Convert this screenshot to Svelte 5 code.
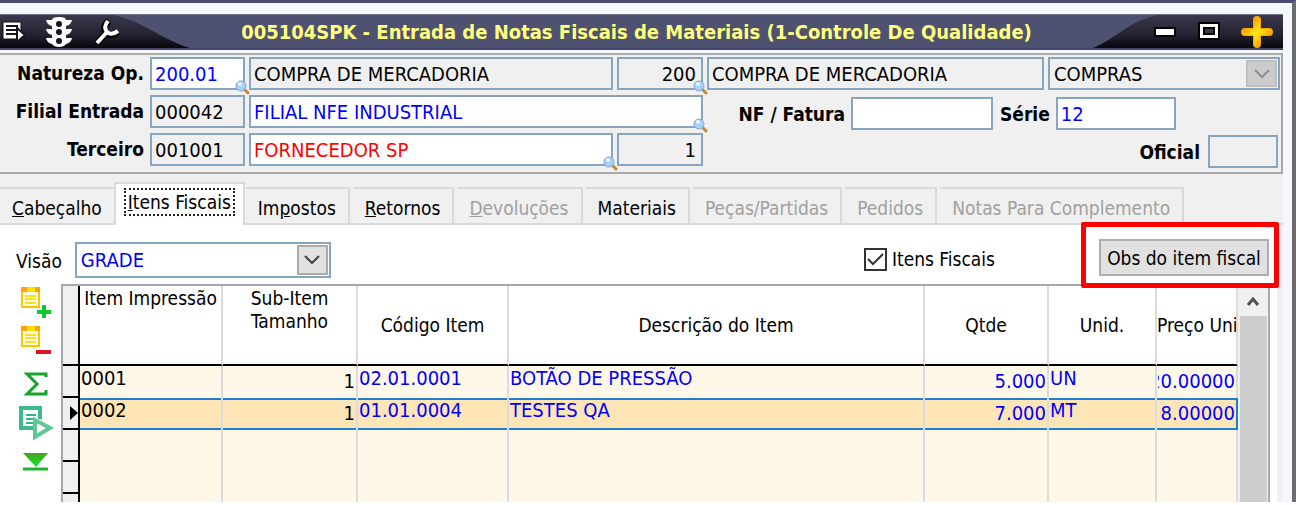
<script>
  let tabs = [
    { id: 'cabecalho', pre: '', key: 'C', post: 'abeçalho' },
    { id: 'itens', pre: '', key: 'I', post: 'tens Fiscais' },
    { id: 'impostos', pre: 'Im', key: 'p', post: 'ostos' },
    { id: 'retornos', pre: '', key: 'R', post: 'etornos' },
    { id: 'devolucoes', pre: '', key: 'D', post: 'evoluções', disabled: true },
    { id: 'materiais', pre: 'Materiais', key: '', post: '' },
    { id: 'pecas', pre: 'Peças/Partidas', key: '', post: '', disabled: true },
    { id: 'pedidos', pre: 'Pedidos', key: '', post: '', disabled: true },
    { id: 'notas', pre: 'Notas Para Complemento', key: '', post: '', disabled: true }
  ];

  let rows = [
    { item: '0001', sub: '1', codigo: '02.01.0001', descricao: 'BOTÃO DE PRESSÃO', qtde: '5.000', unid: 'UN', preco: '20.00000' },
    { item: '0002', sub: '1', codigo: '01.01.0004', descricao: 'TESTES QA', qtde: '7.000', unid: 'MT', preco: '8.00000' }
  ];

  let emptyRows = [1, 2, 3];
  let activeTab = 'itens';
  let selected = 1;
  let itensFiscais = true;
</script>

{#snippet lens()}
  <svg class="lens" viewBox="0 0 15 15" aria-hidden="true">
    <path d="M9 9l4 4" stroke="#c08a3e" stroke-width="3" stroke-linecap="round" />
    <circle cx="6" cy="6" r="5" fill="#a9d0fa" stroke="#7fa6d8" />
    <circle cx="5" cy="4" r="2" fill="#e9f5ff" />
  </svg>
{/snippet}

{#snippet note()}
  <rect x="3" y="3" width="17" height="18" fill="#fffbe0" stroke="#fdc400" stroke-width="2" />
  <path d="M2 1h19v5H2z" fill="#ffa010" />
  <path d="M8 1h8v5H8z" fill="#ffe100" />
  <path d="M6 10h11M6 13h11M6 17h11" stroke="#ffdf20" stroke-width="2" />
{/snippet}

<div class="window">
  <header class="titlebar">
    <svg class="shade left" viewBox="0 0 190 36" preserveAspectRatio="none" aria-hidden="true">
      <defs>
        <linearGradient id="dark" x1="0" y1="0" x2="0" y2="1">
          <stop offset="0" stop-color="#3a384c" />
          <stop offset="0.6" stop-color="#242231" />
          <stop offset="1" stop-color="#07070c" />
        </linearGradient>
      </defs>
      <path d="M0 0H113C143 6 156 24 190 36H0z" fill="url(#dark)" />
    </svg>
    <svg class="shade right" viewBox="0 0 190 36" preserveAspectRatio="none" aria-hidden="true">
      <path d="M190 0H65C36 6 26 24 0 36H190z" fill="url(#dark)" />
    </svg>

    <div class="tools">
      <button aria-label="Menu">
        <svg width="24" height="24" viewBox="0 0 24 24">
          <path d="M2 2h18v17H2z" fill="#fff" stroke="#111" />
          <path d="M5 6h12M5 10h12M5 14h10" stroke="#16151f" stroke-width="2" />
          <path d="M16 8l8 7-8 7z" fill="#fff" stroke="#16151f" stroke-width="2" />
        </svg>
      </button>
      <button aria-label="Status">
        <svg width="28" height="32" viewBox="0 0 28 32">
          <path d="M7 4Q7 1 14 1t7 3h6q-1 5-6 6v3h6q-1 5-6 6v3h6q-1 5-6 6-2 3-7 3t-7-3q-5-1-6-6h6v-3q-5-1-6-6h6v-3Q2 9 1 4z" fill="#fff" />
          <g fill="#16151f"><circle cx="14" cy="8" r="3" /><circle cx="14" cy="16" r="3" /><circle cx="14" cy="25" r="3" /></g>
        </svg>
      </button>
      <button aria-label="Ferramentas">
        <svg width="28" height="28" viewBox="0 0 28 28">
          <path d="M4 25L14 14" stroke="#000" stroke-width="7" />
          <path d="M16 3Q9 9 13 15Q18 19 25 14" fill="none" stroke="#000" stroke-width="7" />
          <path d="M4 25L14 14" stroke="#fff" stroke-width="4" />
          <path d="M15 3Q10 9 14 14Q18 18 25 13" fill="none" stroke="#fff" stroke-width="4" />
        </svg>
      </button>
    </div>
    <h1>005104SPK - Entrada de Notas Fiscais de Materiais (1-Controle De Qualidade)</h1>
    <div class="controls">
      <button aria-label="Minimizar">
        <svg width="24" height="32" viewBox="0 0 24 32"><path d="M2 12h20v8H2z" fill="#fff" stroke="#000" stroke-width="2" /></svg>
      </button>
      <button aria-label="Maximizar">
        <svg width="24" height="32" viewBox="0 0 24 32">
          <path d="M2 7h20v16H2z" fill="#fff" stroke="#000" stroke-width="2" />
          <path d="M7 12h10v6H7z" fill="#3a384c" stroke="#000" stroke-width="2" />
        </svg>
      </button>
      <button aria-label="Fechar">
        <svg width="32" height="32" viewBox="0 0 32 32">
          <defs>
            <linearGradient id="gold" x1="0" y1="0" x2="1" y2="1">
              <stop offset="0.2" stop-color="#ff9c00" />
              <stop offset="0.5" stop-color="#ffe81a" />
              <stop offset="0.8" stop-color="#ffa200" />
            </linearGradient>
          </defs>
          <path d="M16 4v24M4 16h24" stroke="#ffa800" stroke-width="8" stroke-linecap="round" />
          <path d="M13 2h6v11h11v6H19v11h-6V19H2v-6h11z" fill="url(#gold)" />
        </svg>
      </button>
    </div>
  </header>

  <form class="fields">
    <label for="natureza">Natureza Op.</label>
    <div class="field"><input id="natureza" class="edit" value="200.01" />{@render lens()}</div>
    <input aria-label="Descrição da natureza" value="COMPRA DE MERCADORIA" readonly />
    <div class="field"><input aria-label="Código da operação" class="num" value="200" readonly />{@render lens()}</div>
    <input aria-label="Operação" value="COMPRA DE MERCADORIA" readonly />
    <div class="combo off">
      <select aria-label="Tipo" disabled><option>COMPRAS</option></select>
      <span class="drop"><svg width="18" height="12" viewBox="0 0 18 12"><path d="M2 2l7 7 7-7" /></svg></span>
    </div>

    <label for="filial">Filial Entrada</label>
    <input id="filial" value="000042" readonly />
    <div class="field wide"><input aria-label="Nome da filial" class="edit" value="FILIAL NFE INDUSTRIAL" />{@render lens()}</div>
    <div class="group">
      <label class="nf" for="nf">NF / Fatura</label>
      <input id="nf" class="edit" value="" />
      <label for="serie">Série</label>
      <input id="serie" class="edit serie" value="12" />
    </div>

    <label for="terceiro">Terceiro</label>
    <input id="terceiro" value="001001" readonly />
    <div class="field"><input aria-label="Nome do terceiro" class="edit alert" value="FORNECEDOR SP" />{@render lens()}</div>
    <input aria-label="Filial do terceiro" class="num" value="1" readonly />
    <div class="group end">
      <label for="oficial">Oficial</label>
      <input id="oficial" class="oficial" value="" readonly />
    </div>
  </form>

  <div class="tabs" role="tablist">
    {#each tabs as tab}
      <button
        role="tab"
        class:active={tab.id === activeTab}
        aria-selected={tab.id === activeTab}
        disabled={tab.disabled}
        on:click={() => (activeTab = tab.id)}
      ><span>{tab.pre}{#if tab.key}<u>{tab.key}</u>{/if}{tab.post}</span></button>
    {/each}
  </div>

  <main class="panel">
    <div class="bar">
      <label for="visao">Visão</label>
      <div class="combo view">
        <select id="visao"><option>GRADE</option></select>
        <span class="drop"><svg width="18" height="12" viewBox="0 0 18 12"><path d="M2 2l7 7 7-7" /></svg></span>
      </div>
      <label class="check"><input type="checkbox" bind:checked={itensFiscais} />Itens Fiscais</label>
      <div class="marked"><button>Obs do item fiscal</button></div>
    </div>

    <div class="work">
      <div class="side">
        <button aria-label="Incluir item">
          <svg width="32" height="34" viewBox="0 0 32 34">
            {@render note()}
            <path d="M25 19v13M18 26h14" stroke="#10c832" stroke-width="4" />
          </svg>
        </button>
        <button aria-label="Excluir item">
          <svg width="32" height="34" viewBox="0 0 32 34">
            {@render note()}
            <path d="M17 27h15" stroke="#dc1420" stroke-width="4" />
          </svg>
        </button>
        <div class="more">
          <button aria-label="Totalizar">
            <svg width="32" height="34" viewBox="0 0 32 34">
              <path d="M27 10V7H8l10 10L8 27h19v-4" fill="none" stroke="#16a52c" stroke-width="3" />
            </svg>
          </button>
          <button aria-label="Executar">
            <svg width="34" height="34" viewBox="0 0 34 34">
              <path d="M14 22H2V2h19v11" fill="none" stroke="#3fb98a" stroke-width="4" />
              <path d="M7 9h10M7 13h8M7 17h8" stroke="#2fb588" stroke-width="2" />
              <path d="M16 14v17l15-9z" fill="#fff" stroke="#62c596" stroke-width="4" />
            </svg>
          </button>
          <button aria-label="Último item">
            <svg width="32" height="34" viewBox="0 0 32 34">
              <defs>
                <linearGradient id="leaf" x1="0" y1="0" x2="0" y2="1">
                  <stop offset="0" stop-color="#4d9c20" />
                  <stop offset="1" stop-color="#0cf02c" />
                </linearGradient>
              </defs>
              <path d="M4 8h25L17 22z" fill="url(#leaf)" />
              <path d="M4 24h25" stroke="#22b428" stroke-width="3" />
            </svg>
          </button>
        </div>
      </div>

      <div class="grid">
        <table>
          <colgroup>
            <col class="c-mark" /><col class="c-item" /><col class="c-sub" /><col class="c-cod" />
            <col /><col class="c-qtde" /><col class="c-unid" /><col class="c-preco" />
          </colgroup>
          <thead>
            <tr>
              <th class="mark"></th>
              <th class="top">Item Impressão</th>
              <th class="top">Sub-Item<br />Tamanho</th>
              <th>Código Item</th>
              <th>Descrição do Item</th>
              <th>Qtde</th>
              <th>Unid.</th>
              <th>Preço Uni</th>
            </tr>
          </thead>
          <tbody>
            {#each rows as row, i}
              <tr class:selected={i === selected} on:click={() => (selected = i)}>
                <td class="mark">{#if i === selected}<i></i>{/if}</td>
                <td class="plain">{row.item}</td>
                <td class="plain num"><span>{row.sub}</span></td>
                <td>{row.codigo}</td>
                <td>{row.descricao}</td>
                <td class="num"><span>{row.qtde}</span></td>
                <td>{row.unid}</td>
                <td class="num"><span>{row.preco}</span></td>
              </tr>
            {/each}
            {#each emptyRows as n}
              <tr><td class="mark"></td><td></td><td></td><td></td><td></td><td></td><td></td><td></td></tr>
            {/each}
          </tbody>
        </table>
        <div class="scroll">
          <svg width="14" height="30" viewBox="0 0 14 30" aria-hidden="true"><path d="M2 19l5-6 5 6" fill="none" stroke="#505050" stroke-width="3" /></svg>
          <div class="thumb"></div>
        </div>
      </div>
    </div>
  </main>
</div>

<style>
  :global(body) { background: #fff; }

  .window {
    box-sizing: border-box;
    height: calc(100vh - 3px);
    min-height: 480px;
    display: flex;
    flex-direction: column;
    overflow: hidden;
    padding: 11px 9px 0 0;
    border-top: 3px solid #4b4b70;
    border-right: 4px solid #6d6d70;
    background: #f4f7fd;
    color: #000;
    font-family: "DejaVu Sans Condensed", "DejaVu Sans", Tahoma, sans-serif;
    font-size: 19px;
    line-height: 24px;
  }
  .window * { box-sizing: border-box; }
  button, input, select { font: inherit; color: inherit; margin: 0; }
  svg { display: block; }

  .titlebar {
    position: relative;
    display: flex;
    align-items: center;
    flex: none;
    height: 36px;
    background: #4f5170;
    border-top: 1px solid #6f7189;
    border-bottom: 2px solid #45456b;
  }
  .shade { position: absolute; top: 0; height: 100%; width: 190px; }
  .shade.left { left: 0; }
  .shade.right { right: 0; }
  .titlebar button { position: relative; padding: 0; border: 0; background: none; }
  .tools { display: flex; align-items: center; gap: 20px; width: 192px; padding-left: 1px; }
  .controls { display: flex; align-items: center; justify-content: flex-end; gap: 20px; width: 202px; padding-right: 10px; }
  h1 {
    flex: 1;
    margin: 0;
    text-align: center;
    white-space: nowrap;
    color: #ffff80;
    font-size: 20px;
    line-height: 24px;
    font-weight: bold;
  }

  .fields {
    flex: none;
    display: grid;
    grid-template-columns: 146px 95fr 364fr 86fr 337fr 232fr;
    column-gap: 4px;
    row-gap: 5px;
    margin-top: 3px;
    padding: 2px 1px 6px 0;
    background: #f0f0f0;
    border: solid #a9a9a9;
    border-width: 2px 2px 2px 0;
  }
  .fields label { padding-right: 2px; text-align: right; line-height: 32px; font-weight: bold; white-space: nowrap; }
  .field, .combo { position: relative; min-width: 0; }
  .wide { grid-column: span 2; }
  input, select {
    display: block;
    width: 100%;
    min-width: 0;
    height: 33px;
    padding: 0 3px;
    border: 2px solid #88a5bf;
    border-radius: 0;
    background: #f0f0f0;
    font-size: 20px;
    outline: 0;
    opacity: 1;
  }
  .edit { background: #fff; color: #0000ff; }
  .edit.alert { color: #ff0000; }
  input.num { text-align: right; padding-right: 5px; }
  .lens { position: absolute; right: -5px; bottom: -5px; width: 15px; height: 15px; z-index: 1; }
  .combo select { appearance: none; padding: 0 4px; color: #000; }
  .drop {
    position: absolute;
    top: 3px;
    right: 3px;
    bottom: 3px;
    width: 31px;
    display: flex;
    align-items: center;
    justify-content: center;
    border: 2px solid #aaa;
    background: #e1e1e1;
    pointer-events: none;
  }
  .drop path { fill: none; stroke: #444; stroke-width: 2; }
  .off .drop { background: #ccc; border-color: #bfbfbf; }
  .off .drop path { stroke: #8d8d8d; }
  .group { grid-column: span 2; display: flex; align-items: center; gap: 4px; margin: 2px 0 -2px; }
  .group .nf { width: 140px; }
  .group #nf { width: 142px; margin-right: 3px; }
  .group .serie { width: 120px; }
  .group.end { justify-content: flex-end; gap: 6px; padding-right: 2px; }
  .group .oficial { width: 70px; }

  .tabs {
    flex: none;
    display: flex;
    align-items: flex-end;
    gap: 3px;
    height: 51px;
    background: linear-gradient(#dadada, #dadada) bottom / 100% 2px no-repeat #f0f0f0;
  }
  .tabs button {
    height: 38px;
    padding: 3px 12px 0;
    border: solid #dadada;
    border-width: 2px 2px 2px 0;
    background: #f0f0f0;
    white-space: nowrap;
  }
  .tabs button:disabled { color: #a0a0a0; }
  .tabs button.active {
    height: 43px;
    margin: 0 -2px 0 -5px;
    padding: 0 8px;
    border-width: 2px 2px 0;
    background: #fff;
  }
  .tabs .active span { display: block; height: 28px; margin-bottom: 6px; padding: 0 2px; border: 2px dotted #222; line-height: 24px; }

  .panel {
    flex: 1;
    min-height: 0;
    display: flex;
    flex-direction: column;
    background: #fff;
    border-right: 6px solid #f0f0f0;
  }
  .bar { flex: none; display: flex; align-items: flex-start; height: 59px; padding: 14px 8px 0 16px; }
  .bar > label { line-height: 44px; }
  .bar .view { width: 256px; margin: 3px 0 0 13px; }
  .view select { height: 36px; color: #0000ff; background: #fff; }
  .check { display: flex; align-items: center; gap: 5px; height: 40px; margin: 0 104px 0 auto; }
  .bar .check { line-height: 24px; }
  .check input {
    appearance: none;
    flex: none;
    width: 23px;
    height: 23px;
    padding: 0;
    border: 2px solid #333;
    background: #fff;
  }
  .check input:checked {
    background: url("data:image/svg+xml,%3Csvg xmlns='http://www.w3.org/2000/svg' viewBox='0 0 19 19'%3E%3Cpath d='M2 9l5 5L17 4' fill='none' stroke='%23333' stroke-width='2'/%3E%3C/svg%3E");
  }
  .marked { position: relative; }
  .marked::after {
    content: "";
    position: absolute;
    inset: -17px -10px -12px -18px;
    border: 5px solid #ff0000;
    border-radius: 2px;
    pointer-events: none;
    z-index: 1;
  }
  .marked button { width: 170px; height: 37px; padding: 0; border: 2px solid #adadad; background: #e1e1e1; white-space: nowrap; }

  .work { flex: 1; min-height: 0; display: flex; }
  .side { flex: none; width: 61px; padding: 2px 0 0 19px; }
  .side, .more { display: flex; flex-direction: column; gap: 5px; }
  .more { padding-top: 3px; }
  .side button { padding: 0; border: 0; background: none; }
  .grid {
    flex: 1;
    min-width: 0;
    display: flex;
    align-items: stretch;
    margin-right: 7px;
    overflow: hidden;
    border: solid #a5a8b0;
    border-width: 2px 2px 0;
  }
  table { flex: 1; min-width: 0; width: 100%; table-layout: fixed; border-collapse: separate; border-spacing: 0; align-self: flex-start; }
  .c-mark { width: 17px; }
  .c-item { width: 143px; }
  .c-sub { width: 135px; }
  .c-cod { width: 151px; }
  .c-qtde { width: 124px; }
  .c-unid { width: 108px; }
  .c-preco { width: 81px; }
  th, td { padding: 0 1px; overflow: hidden; white-space: nowrap; border-right: 2px solid #dcdcdc; }
  th { height: 80px; border-bottom: 2px solid #000; background: #fff; font-weight: normal; line-height: 23px; vertical-align: middle; }
  th:last-child { padding: 0; }
  th.top { vertical-align: top; padding-top: 1px; }
  td { height: 32px; vertical-align: top; background: #fff8e8; color: #0000ff; font-size: 20px; }
  td.plain { color: #000; }
  td.num { padding-top: 3px; }
  td.num span { display: flex; justify-content: flex-end; overflow: hidden; }
  .mark { padding: 0; background: #f0f0f0; border-right: 2px solid #000; border-bottom: 2px solid #000; vertical-align: middle; }
  .mark i { display: block; width: 0; margin-left: auto; border: solid transparent; border-width: 7px 0 7px 8px; border-left-color: #000; }
  .selected td:not(.mark) { background: #fde5b5; box-shadow: inset 0 2px #1c7cd6, inset 0 -2px #1c7cd6; }
  .selected td:last-child { border-right-color: #1c7cd6; }
  .scroll { flex: none; width: 30px; display: flex; flex-direction: column; align-items: center; background: #f0f0f0; }
  .thumb { flex: 1; width: 27px; background: #cdcdcd; }
</style>
